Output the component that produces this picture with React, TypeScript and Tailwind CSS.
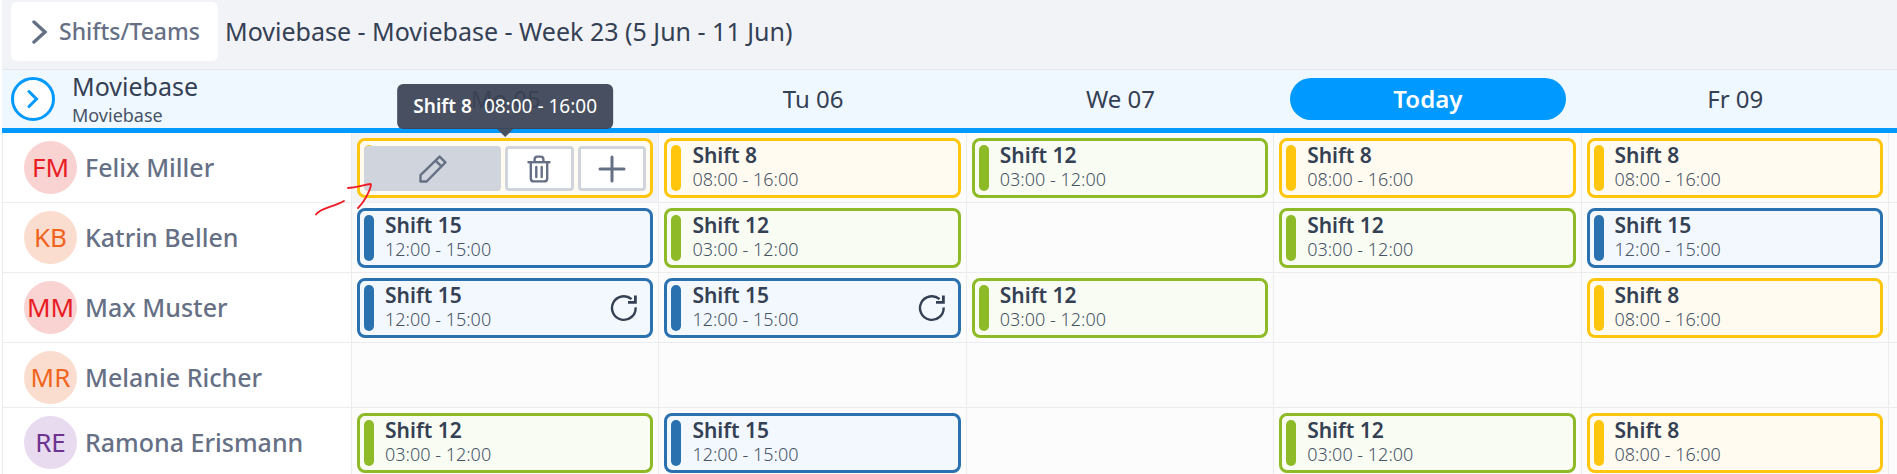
import { clsx } from 'clsx';

type Kind = 'early' | 'night' | 'noon';

type Shift = {
  kind: Kind;
  repeat?: boolean;
  active?: boolean;
};

const shiftTypes = {
  early: { name: 'Shift 8', time: '08:00 - 16:00', card: 'border-[#ffc60d] bg-[#fffbf0]', bar: 'bg-[#ffc60d]' },
  night: { name: 'Shift 12', time: '03:00 - 12:00', card: 'border-[#8dba26] bg-[#f9fcf3]', bar: 'bg-[#8dba26]' },
  noon: { name: 'Shift 15', time: '12:00 - 15:00', card: 'border-[#2a71b0] bg-[#f2f8fd]', bar: 'bg-[#2a71b0]' },
};

const days = ['Mo 05', 'Tu 06', 'We 07', 'Today', 'Fr 09'];

const red = 'bg-[#f9d2d2] text-[#e81c23]';
const orange = 'bg-[#fbddcf] text-[#f0641e]';
const purple = 'bg-[#e8daef] text-[#6b348f]';

const people: { name: string; initials: string; color: string; shifts: (Shift | null)[] }[] = [
  {
    name: 'Felix Miller',
    initials: 'FM',
    color: red,
    shifts: [{ kind: 'early', active: true }, { kind: 'early' }, { kind: 'night' }, { kind: 'early' }, { kind: 'early' }],
  },
  {
    name: 'Katrin Bellen',
    initials: 'KB',
    color: orange,
    shifts: [{ kind: 'noon' }, { kind: 'night' }, null, { kind: 'night' }, { kind: 'noon' }],
  },
  {
    name: 'Max Muster',
    initials: 'MM',
    color: red,
    shifts: [{ kind: 'noon', repeat: true }, { kind: 'noon', repeat: true }, { kind: 'night' }, null, { kind: 'early' }],
  },
  {
    name: 'Melanie Richer',
    initials: 'MR',
    color: orange,
    shifts: [null, null, null, null, null],
  },
  {
    name: 'Ramona Erismann',
    initials: 'RE',
    color: purple,
    shifts: [{ kind: 'night' }, { kind: 'noon' }, null, { kind: 'night' }, { kind: 'early' }],
  },
];

function RepeatIcon() {
  return (
    <svg className="w-7 h-7 text-[#344054]" viewBox="0 0 28 28" fill="none" stroke="currentColor" strokeWidth="2.4">
      <path d="M25.6 13.4 A11.8 11.8 0 1 1 21.6 5.2" />
      <path d="M25.4 1.6 V8.4 H18" strokeWidth="2.8" />
    </svg>
  );
}

function PencilIcon() {
  return (
    <svg className="w-7 h-7" viewBox="0 0 28 28" fill="none" stroke="currentColor" strokeWidth="2.4" strokeLinejoin="round">
      <path d="M1.5 26.5 V20.2 L20.6 1.6 L26.4 7.4 L7.6 26.5 Z" />
      <path d="M16.6 5.6 L22.4 11.4" />
    </svg>
  );
}

function TrashIcon() {
  return (
    <svg className="w-6 h-7" viewBox="0 0 24 28" fill="none" stroke="currentColor" strokeWidth="2.4">
      <path d="M0.5 7.2 H23.5" />
      <path d="M7.6 7 V4.4 Q7.6 1.6 10.4 1.6 H13.6 Q16.4 1.6 16.4 4.4 V7" />
      <path d="M3.8 7.2 V23.4 Q3.8 26.4 6.8 26.4 H17.2 Q20.2 26.4 20.2 23.4 V7.2" />
      <path d="M9.3 12 V22 M14.7 12 V22" strokeLinecap="round" />
    </svg>
  );
}

function PlusIcon() {
  return (
    <svg className="w-7 h-7" viewBox="0 0 28 28" fill="none" stroke="currentColor" strokeWidth="3" strokeLinecap="round">
      <path d="M14 2 V26 M2 14 H26" />
    </svg>
  );
}

function Tooltip({ name, time }: { name: string; time: string }) {
  return (
    <div role="tooltip" className="absolute bottom-full left-1/2 -translate-x-1/2 z-10 mb-1 flex flex-col items-center">
      <div className="flex h-[45px] items-center gap-3 rounded-md bg-[#3a4254]/93 px-4 text-[19px] text-white whitespace-nowrap">
        <strong className="font-semibold">{name}</strong>
        <span>{time}</span>
      </div>
      <div className="w-4 h-2 bg-[#475060] [clip-path:polygon(0_0,100%_0,50%_100%)]" />
    </div>
  );
}

function ShiftCard({ shift }: { shift: Shift }) {
  const type = shiftTypes[shift.kind];

  if (shift.active) {
    const action = 'flex items-center justify-center rounded border-3 border-[#d0d5dd] text-[#667085]';
    return (
      <div className={clsx('relative flex h-[60px] rounded-lg border-3 p-1', type.card)}>
        <Tooltip name={type.name} time={type.time} />
        <span className={clsx('absolute left-1 inset-y-1 w-[10px] rounded-full', type.bar)} />
        <div className="relative mt-px grid flex-1 grid-cols-[2fr_1fr_1fr] gap-1">
          <button type="button" aria-label="Edit shift" className={clsx(action, 'bg-[#d0d5dd]')}>
            <PencilIcon />
          </button>
          <button type="button" aria-label="Delete shift" className={clsx(action, 'bg-white')}>
            <TrashIcon />
          </button>
          <button type="button" aria-label="Add shift" className={clsx(action, 'bg-white')}>
            <PlusIcon />
          </button>
        </div>
        {/* hand-drawn arrow pointing at the edit button */}
        <svg
          className="absolute -left-12 top-10 w-16 h-10 pointer-events-none"
          viewBox="0 0 64 40"
          fill="none"
          stroke="#ee1c24"
          strokeWidth="1.8"
          strokeLinecap="round"
        >
          <path d="M4 33.5 C8 27 22 26 32 20" />
          <path d="M36 7 C43 6.5 52 4 58.5 3 C60.5 3 55 18 46 27" />
        </svg>
      </div>
    );
  }

  return (
    <div className={clsx('flex h-[60px] items-center rounded-lg border-3 p-1 pr-3', type.card)}>
      <span className={clsx('h-full w-[10px] rounded-full', type.bar)} />
      <div className="ml-[11px] flex-1 pb-[2px]">
        <div className="text-[21px] leading-6 font-semibold text-[#344054]">{type.name}</div>
        <div className="text-lg leading-6 font-light text-[#475467]">{type.time}</div>
      </div>
      {shift.repeat && <RepeatIcon />}
    </div>
  );
}

export default function App() {
  return (
    <div className="h-screen overflow-hidden bg-white pl-[2px] font-['Noto_Sans',sans-serif] text-[#344054]">
      {/* Top bar */}
      <header className="flex items-start border-b border-[#e4e7ec] bg-[#f2f3f7] pt-[2px] pb-2 pl-[9px]">
        <button type="button" className="flex h-[59px] items-center gap-[11px] rounded-md bg-white pl-[21px] pr-[18px] text-[23px] font-medium text-[#667085]">
          <svg className="w-4 h-6" viewBox="0 0 16 24" fill="none" stroke="currentColor" strokeWidth="3.4" strokeLinecap="round">
            <path d="M2 2 L13 12 L2 22" />
          </svg>
          <span>Shifts/Teams</span>
        </button>
        <h1 className="ml-[7px] text-[25px] leading-[59px] font-normal">Moviebase - Moviebase - Week 23 (5 Jun - 11 Jun)</h1>
      </header>

      {/* Week plan */}
      <table className="w-full table-fixed border-separate border-spacing-0">
        <thead>
          <tr className="h-[63px]">
            <th scope="col" className="w-[350px] border-b-[5px] border-[#0099ff] bg-[#f0f8ff] p-0 pl-[9px] text-left font-normal">
              <div className="flex items-center gap-[17px]">
                <button
                  type="button"
                  aria-label="Expand team"
                  className="flex size-11 items-center justify-center rounded-full border-3 border-[#0099ff] bg-white text-[#0099ff]"
                >
                  <svg className="w-3 h-5" viewBox="0 0 12 20" fill="none" stroke="currentColor" strokeWidth="3" strokeLinecap="round">
                    <path d="M2 2.5 L9.5 10 L2 17.5" />
                  </svg>
                </button>
                <div>
                  <div className="text-[25px] leading-8">Moviebase</div>
                  <div className="text-lg leading-[26px] text-[#475467]">Moviebase</div>
                </div>
              </div>
            </th>
            {days.map((day) => (
              <th key={day} scope="col" className="border-b-[5px] border-[#0099ff] bg-[#f0f8ff] px-4 py-0 text-2xl font-normal">
                <div className={clsx('leading-[42px]', day === 'Today' && 'rounded-full bg-[#0099ff] font-semibold text-white')}>{day}</div>
              </th>
            ))}
            <td className="w-2 border-b-[5px] border-[#0099ff] bg-[#f0f8ff] p-0" />
          </tr>
        </thead>
        <tbody>
          {people.map((person) => (
            <tr key={person.initials} className="h-[65px]">
              <th scope="row" className="border-x border-b border-[#eaecf0] p-0 pt-2 pl-[21px] text-left align-top text-[25px] font-medium text-[#667085]">
                <div className="flex items-center gap-2">
                  <span className={clsx('flex size-[53px] items-center justify-center rounded-full text-[26px] font-normal', person.color)}>
                    {person.initials}
                  </span>
                  <span>{person.name}</span>
                </div>
              </th>
              {person.shifts.map((shift, i) => (
                <td
                  key={days[i]}
                  className={clsx('border-r border-b border-[#eaecf0] px-[5px] pt-[5px] pb-1 align-top', shift?.active ? 'bg-[#f2f3f5]' : 'bg-[#fcfcfd]')}
                >
                  {shift && <ShiftCard shift={shift} />}
                </td>
              ))}
              <td className="border-b border-[#eaecf0] bg-[#fcfcfd] p-0" />
            </tr>
          ))}
        </tbody>
      </table>
    </div>
  );
}
